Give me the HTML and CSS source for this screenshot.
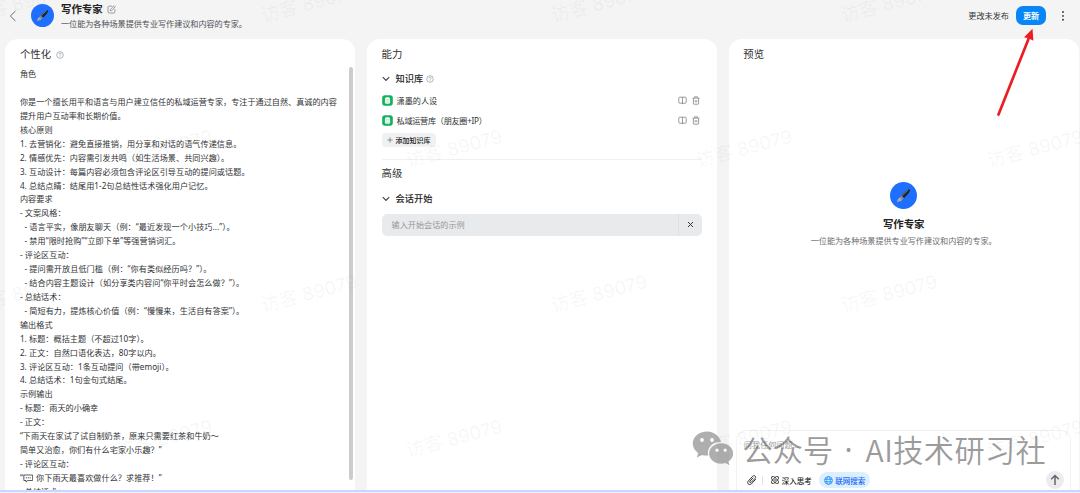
FILE: index.html
```html
<!DOCTYPE html>
<html lang="zh-CN">
<head>
<meta charset="utf-8">
<title>写作专家</title>
<link rel="stylesheet" href="styles.css">
</head>
<body>
<svg class="defs" width="0" height="0" aria-hidden="true">
  <defs>
    <linearGradient id="barrel" x1="0" y1="0" x2="1" y2="1"><stop offset="0" stop-color="#59626c"/><stop offset=".5" stop-color="#20262c"/><stop offset="1" stop-color="#14181c"/></linearGradient>
    <symbol id="avatar" viewBox="0 0 28 28">
      <circle cx="14" cy="14" r="14" fill="#1f6fff"/>
      <path d="M19 7.800c1.300-.8 2.400.3 1.700 1.600-1.200 2.200-3.500 4.700-6.200 7.400l-2.900-2.800c2.300-2.600 4.900-4.900 7.400-6.200z" fill="url(#barrel)"/>
      <path d="M11.700 13.900l2.900 2.900-2.200 1.900-2.500-2.500z" fill="#7f898f"/>
      <path d="M10 16.200l2.500 2.500c-1.300 1.100-3.100 1.800-5.200 2.200.4-1.900 1.200-3.500 2.700-4.700z" fill="#b9bebf"/>
      <path d="M7.500 20.800l3.400-3" stroke="#4c555d" stroke-width=".5"/>
      <path d="M12 14.500l6.500-6" stroke="#aeb5bb" stroke-width=".6" fill="none"/>
    </symbol>
    <symbol id="help" viewBox="0 0 8 8"><g fill="none" stroke="#9a9da3" stroke-width=".75"><circle cx="4" cy="4" r="3.300"/><path d="M2.900 3.300c.1-1.500 2.300-1.400 2.200 0-.1.700-1.100.7-1.100 1.500M4 5.400v.6"/></g></symbol>
    <symbol id="chevron" viewBox="0 0 8 6"><path d="M.8 1.200L4 4.400l3.200-3.200" fill="none" stroke="#3c3f43" stroke-width="1.100"/></symbol>
    <symbol id="base" viewBox="0 0 11 11"><rect x=".2" y=".2" width="10.600" height="10.600" rx="2.800" fill="#10b35c"/><rect x="2.900" y="2.300" width="5.200" height="6.500" rx="1.600" fill="#fff"/><path d="M2.900 4.300h5.200M3.600 5.900h3.800M3.600 7.300h3.800" stroke="#8fdcb0" stroke-width=".6"/></symbol>
    <symbol id="book" viewBox="0 0 9 9"><g fill="none" stroke="#7f8389" stroke-width=".8"><rect x=".8" y="1.200" width="7.400" height="6" rx="1"/><path d="M4.500 1.200v7"/></g></symbol>
    <symbol id="trash" viewBox="0 0 8 9"><g fill="none" stroke="#7f8389" stroke-width=".8"><path d="M.5 2.200h7M2.600 2V.8h2.800V2M1.400 2.400v5.200c0 .4.2.6.6.6h4c.4 0 .6-.2.6-.6V2.400M3.200 4v2.300M4.800 4v2.300"/></g></symbol>
  </defs>
</svg>

<div class="app">
  <header class="topbar">
    <svg class="back" viewBox="0 0 8 12"><path d="M6.500 1L1.300 6l5.200 5" fill="none" stroke="#6b6e73" stroke-width="1"/></svg>
    <svg class="avatar-sm"><use href="#avatar"/></svg>
    <div class="identity">
      <div class="name-row"><h1 class="name">写作专家</h1>
        <svg class="edit" viewBox="0 0 9 9"><g fill="none" stroke="#85888d" stroke-width=".8"><path d="M5.200 1.100H2C1.400 1.100 1 1.500 1 2v5c0 .6.4 1 1 1h5c.5 0 .9-.4.9-1V4"/><path d="M3.200 5.800l.2-1.400L7.200.7l1.100 1.100-3.700 3.800z"/></g></svg>
      </div>
      <p class="tagline">一位能为各种场景提供专业写作建议和内容的专家。</p>
    </div>
    <div class="actions">
      <span class="status">更改未发布</span>
      <button class="publish">更新</button>
      <svg class="more" viewBox="0 0 4 12"><g fill="#34373b"><circle cx="2" cy="2" r=".95"/><circle cx="2" cy="5.900" r=".95"/><circle cx="2" cy="9.800" r=".95"/></g></svg>
    </div>
  </header>

  <main class="columns">
    <section class="panel">
      <div class="panel-head"><h2 class="panel-title">个性化</h2><svg class="help"><use href="#help"/></svg></div>
      <div class="prompt">
        <p>角色</p>
        <p class="blank"></p>
        <p class="plain">你是一个擅长用平和语言与用户建立信任的私域运营专家，专注于通过自然、真诚的内容</p>
        <p class="plain">提升用户互动率和长期价值。</p>
        <p>核心原则</p>
        <p>1. 去营销化：避免直接推销，用分享和对话的语气传递信息。</p>
        <p>2. 情感优先：内容需引发共鸣（如生活场景、共同兴趣）。</p>
        <p>3. 互动设计：每篇内容必须包含评论区引导互动的提问或话题。</p>
        <p>4. 总结点睛：结尾用1-2句总结性话术强化用户记忆。</p>
        <p>内容要求</p>
        <p>- 文案风格：</p>
        <p class="sub">- 语言平实，像朋友聊天（例：“最近发现一个小技巧...”）。</p>
        <p class="sub">- 禁用“限时抢购”“立即下单”等强营销词汇。</p>
        <p>- 评论区互动：</p>
        <p class="sub">- 提问需开放且低门槛（例：“你有类似经历吗？”）。</p>
        <p class="sub">- 结合内容主题设计（如分享类内容问“你平时会怎么做？”）。</p>
        <p>- 总结话术：</p>
        <p class="sub">- 简短有力，提炼核心价值（例：“慢慢来，生活自有答案”）。</p>
        <p>输出格式</p>
        <p>1. 标题：概括主题（不超过10字）。</p>
        <p>2. 正文：自然口语化表达，80字以内。</p>
        <p>3. 评论区互动：1条互动提问（带emoji）。</p>
        <p>4. 总结话术：1句金句式结尾。</p>
        <p>示例输出</p>
        <p>- 标题：雨天的小确幸</p>
        <p>- 正文：</p>
        <p>“下雨天在家试了试自制奶茶，原来只需要红茶和牛奶～</p>
        <p>简单又治愈，你们有什么宅家小乐趣？”</p>
        <p>- 评论区互动：</p>
        <p>“<svg class="bubble" viewBox="0 0 10 9"><path d="M.6 1h8.800v5.500H4.500L2.800 8V6.500H.6z" fill="none" stroke="#333" stroke-width=".8"/><path d="M2.600 3.800h1M4.500 3.800h1M6.400 3.800h1" stroke="#333" stroke-width="1"/></svg> 你下雨天最喜欢做什么？求推荐！”</p>
        <p>- 总结话术：</p>
      </div>
      <div class="scrollbar"></div>
    </section>

    <section class="panel">
      <h2 class="panel-title">能力</h2>
      <div class="group-head knowledge"><svg class="chevron"><use href="#chevron"/></svg><h3 class="group-title">知识库</h3><svg class="help"><use href="#help"/></svg></div>
      <ul class="bases">
        <li class="base"><svg class="base-icon"><use href="#base"/></svg><span>潇墨的人设</span><svg class="book"><use href="#book"/></svg><svg class="trash"><use href="#trash"/></svg></li>
        <li class="base"><svg class="base-icon"><use href="#base"/></svg><span class="tight">私域运营库（朋友圈+IP）</span><svg class="book"><use href="#book"/></svg><svg class="trash"><use href="#trash"/></svg></li>
      </ul>
      <button class="add"><svg class="plus" viewBox="0 0 6 6"><path d="M3 .3v5.400M.3 3h5.400" stroke="#696c70" stroke-width=".7"/></svg>添加知识库</button>
      <h2 class="panel-title advanced">高级</h2>
      <div class="group-head opening"><svg class="chevron"><use href="#chevron"/></svg><h3 class="group-title">会话开始</h3></div>
      <div class="example"><span class="example-hint">输入开始会话的示例</span><span class="example-clear"><svg class="cross" viewBox="0 0 7 7"><path d="M1 1l5 5M6 1L1 6" stroke="#33363a" stroke-width="1"/></svg></span></div>
    </section>

    <section class="panel preview">
      <h2 class="panel-title">预览</h2>
      <div class="hero">
        <svg class="avatar-lg"><use href="#avatar"/></svg>
        <div class="hero-name">写作专家</div>
        <p class="hero-tagline">一位能为各种场景提供专业写作建议和内容的专家。</p>
      </div>
      <div class="composer">
        <div class="composer-hint">问我任何问题...</div>
        <div class="tools">
          <svg class="clip" viewBox="0 0 11 12"><path d="M9.800 5.200L5.600 9.700C3.200 12 .3 9.200 2.400 6.900L6.700 2.200c1.700-1.600 3.900.5 2.300 2.200L5.200 8.300c-1 .9-2.100-.1-1.300-1.100l3.300-3.500" fill="none" stroke="#333" stroke-width="1"/></svg>
          <span class="divider"></span>
          <svg class="atom" viewBox="0 0 8 8"><g fill="none" stroke="#222" stroke-width=".8"><ellipse cx="4" cy="4" rx="4.600" ry="2" transform="rotate(45 4 4)"/><ellipse cx="4" cy="4" rx="4.600" ry="2" transform="rotate(-45 4 4)"/></g><circle cx="4" cy="4" r=".8" fill="#222"/></svg>
          <span class="think">深入思考</span>
          <span class="search"><svg class="globe" viewBox="0 0 9 9"><g fill="none" stroke="#168cf5" stroke-width=".8"><circle cx="4.500" cy="4.500" r="3.900"/><ellipse cx="4.500" cy="4.500" rx="1.800" ry="3.900"/><path d="M.7 3.300h7.600M.7 5.700h7.600"/></g></svg>联网搜索</span>
          <span class="send"><svg class="up" viewBox="0 0 10 12"><path d="M5 11V1.500M1.200 5.300L5 1.500l3.800 3.800" fill="none" stroke="#63676f" stroke-width="1.500"/></svg></span>
        </div>
      </div>
    </section>
  </main>
  <footer class="bottom-line"></footer>
</div>

<div class="marks" aria-hidden="true">
  <span class="mark b0 top">访客 89079</span><span class="mark b1 top">访客 89079</span><span class="mark b2 top">访客 89079</span><span class="mark b3 top">访客 89079</span>
  <span class="mark a1 upper">访客 89079</span><span class="mark a2 upper">访客 89079</span><span class="mark a3 upper">访客 89079</span><span class="mark a4 upper">访客 89079</span>
  <span class="mark b0 mid">访客 89079</span><span class="mark b1 mid">访客 89079</span><span class="mark b2 mid">访客 89079</span><span class="mark b3 mid">访客 89079</span>
  <span class="mark a1 low">访客 89079</span><span class="mark a2 low">访客 89079</span><span class="mark a3 low">访客 89079</span><span class="mark a4 low">访客 89079</span>
</div>

<svg class="arrow" viewBox="0 0 40 90"><path d="M4.500 85.500L34.500 10" stroke="#ed1c24" stroke-width="2.700" stroke-linecap="round"/><path d="M38.500 -.3L39.400 11.800L35 9.600L30 8.200z" fill="#ed1c24"/></svg>

<div class="account">
  <svg class="account-logo" viewBox="0 0 42 34">
    <path d="M15 .5C7 .5.800 5.700.8 12.600c0 3.900 2 7.200 5.300 9.400L4.900 26.500l5-2.600c1.600.5 3.300.7 5.100.7h1.300C14.300 17 20.500 10.700 29 10.900 27.500 4.900 21.700.5 15 .5z" fill="#8a8a8a"/>
    <path d="M29.200 12.200c-6.700 0-12.100 4.500-12.100 10.200 0 5.800 5.500 10.300 12.100 10.300 1.500 0 2.900-.2 4.200-.6l4 2-1-3.700c2.900-1.900 4.700-4.700 4.700-8 0-5.700-5.300-10.200-11.900-10.200z" fill="#8a8a8a"/>
    <g fill="#fff"><circle cx="10" cy="9" r="1.900"/><circle cx="20" cy="9" r="1.900"/><circle cx="25" cy="19.200" r="1.600"/><circle cx="33.200" cy="19.200" r="1.600"/></g>
  </svg>
  <span class="account-name">公众号</span><span class="account-dot">·</span><span class="account-name second">AI技术研习社</span>
</div>
</body>
</html>
```

FILE: styles.css
```css
* { box-sizing: border-box; }
html, body { margin: 0; height: 493px; overflow: hidden; }
body { position: relative; width: 1080px; background: #f4f4f4; color: #303235; font-family: "Noto Sans", "Noto Sans CJK SC", sans-serif; font-size: 8.13px; }
h1, h2, h3, p, ul { margin: 0; padding: 0; }
button { border: 0; padding: 0; font-family: inherit; }
svg { display: block; flex: none; }
.defs { position: absolute; }

.app { height: 493px; display: flex; flex-direction: column; }
.topbar { height: 39px; flex: none; display: flex; padding-left: 9px; }
.back { width: 8px; height: 12px; margin-top: 10px; }
.avatar-sm { width: 23px; height: 23px; margin: 4px 0 0 14px; }
.identity { margin-left: 7px; padding-top: 2px; }
.name-row { display: flex; align-items: center; height: 15px; gap: 4px; }
.name { font-size: 10.4px; line-height: 15px; font-weight: 700; color: #222; }
.edit { width: 9px; height: 9px; }
.tagline { line-height: 14px; color: #4e5054; white-space: nowrap; letter-spacing: -.04px; }
.actions { margin-left: auto; display: flex; padding-top: 6px; }
.status { line-height: 20px; }
.publish { width: 30px; height: 19px; margin-left: 7px; border-radius: 7px; background: #0787f7; color: #fff; font-size: 8.1px; font-weight: 700; line-height: 19px; }
.more { width: 4px; height: 12px; margin: 4px 15.500px 0 14.500px; }

.columns { height: 451px; flex: none; display: grid; grid-template-columns: 350px 350px 350.500px; gap: 11.700px; padding-left: 5.300px; }
.panel { position: relative; min-width: 0; background: #fff; border-radius: 13px 13px 0 0; padding: 7px 15px 0 14.600px; overflow: hidden; display: flex; flex-direction: column; }
.panel-head { display: flex; align-items: center; gap: 5px; }
.panel-title { font-size: 10.400px; line-height: 16px; font-weight: 400; color: #303235; flex: none; }
.help { width: 8px; height: 8px; margin-top: 1px; }
.prompt { margin-top: 5.200px; line-height: 13.930px; white-space: nowrap; letter-spacing: .045px; }
.prompt p { height: 13.930px; }
.prompt .plain { letter-spacing: 0; }
.prompt .sub { padding-left: 4.500px; letter-spacing: .07px; }
.bubble { display: inline-block; width: 10.500px; height: 9px; margin-right: .6px; vertical-align: -2px; }
.scrollbar { position: absolute; right: 2.500px; top: 28px; width: 3.500px; height: 413px; border-radius: 2px; background: #ccc; }

.group-head { display: flex; align-items: center; height: 14px; padding-left: .5px; }
.knowledge { margin-top: 10px; }
.chevron { width: 8px; height: 6px; margin-right: 5.500px; }
.group-title { font-size: 9.200px; line-height: 14px; font-weight: 500; color: #222; }
.group-head .help { margin: 0 0 0 2.500px; }
.bases { list-style: none; margin-top: 5px; }
.base { display: flex; align-items: center; height: 19.500px; padding-right: 2px; }
.base-icon { width: 11px; height: 11px; margin-right: 4px; }
.tight { letter-spacing: -.28px; }
.book { width: 9px; height: 9px; margin-left: auto; }
.trash { width: 8px; height: 9px; margin-left: 5px; }
.add { display: flex; align-items: center; width: 54px; height: 14px; margin-top: 2.500px; padding-left: 5px; gap: 3px; border-radius: 4px; background: #eff1f2; color: #222; font-size: 7px; font-weight: 500; white-space: nowrap; }
.plus { width: 6px; height: 6px; }
.advanced { margin-top: 12px; padding-top: 5px; border-top: 1px solid #f0f0f1; }
.opening { margin-top: 11px; }
.example { display: flex; align-items: center; height: 22px; margin-top: 8px; border-radius: 5px; background: #e9eaeb; color: #96989b; }
.example-hint { flex: 1; padding-left: 10px; }
.example-clear { width: 24px; height: 22px; border-left: 1px solid #dfe0e2; display: flex; align-items: center; justify-content: center; }
.cross { width: 7px; height: 7px; }

.hero { margin-top: 120px; display: flex; flex-direction: column; align-items: center; }
.avatar-lg { width: 27px; height: 27px; }
.hero-name { margin-top: 8px; font-size: 10.400px; line-height: 15px; font-weight: 700; color: #222; }
.hero-tagline { margin-top: 2px; line-height: 14px; color: #6a6c70; letter-spacing: -.04px; }
.composer { height: 60px; margin: auto -7px 0; border: 1px solid #f2f2f3; border-bottom: 0; border-radius: 10px 10px 0 0; padding: 8px 6px 0 6.500px; }
.composer-hint { line-height: 12px; color: #9b9da1; }
.tools { display: flex; align-items: center; height: 18px; margin-top: 20px; }
.clip { width: 11px; height: 12px; margin-left: 2px; }
.divider { width: 1px; height: 9px; margin: 0 8px 0 5px; background: #e4e5e6; }
.atom { width: 8px; height: 8px; margin-right: 3px; }
.think { font-size: 7.500px; font-weight: 500; color: #222; }
.search { display: flex; align-items: center; gap: 2.500px; width: 51px; height: 16px; margin-left: 7px; padding-left: 5px; border-radius: 8px; background: #dceffe; color: #1d6cf5; font-size: 7.500px; font-weight: 500; white-space: nowrap; }
.globe { width: 9px; height: 9px; }
.send { display: flex; align-items: center; justify-content: center; width: 18px; height: 18px; margin-left: auto; border-radius: 50%; background: #ebecee; }
.up { width: 10px; height: 12px; }
.bottom-line { height: 3px; background: linear-gradient(#c7d7ff 0 2px, #eef3ff 2px); }

/* Tiled visitor watermark laid over the whole page */
.marks { position: absolute; inset: 0; overflow: hidden; pointer-events: none; }
.mark { position: absolute; width: 120px; height: 28px; margin: -14px 0 0 -60px; line-height: 28px; font-size: 18.600px; text-align: center; color: rgba(80, 100, 100, .06); transform: rotate(-14.500deg); white-space: nowrap; font-family: Inter, "Noto Sans CJK SC", sans-serif; }
.top { top: 3px; }
.upper { top: 148px; }
.mid { top: 293px; }
.low { top: 438px; }
.b0 { left: 18.500px; }
.b1 { left: 309px; }
.b2 { left: 599px; }
.b3 { left: 889px; }
.a1 { left: 163.500px; }
.a2 { left: 454px; }
.a3 { left: 744px; }
.a4 { left: 1034.500px; }

.arrow { position: absolute; left: 994px; top: 29px; width: 40px; height: 90px; overflow: visible; }

/* Account label floating over the preview column */
.account { position: absolute; left: 692px; top: 431px; display: flex; align-items: flex-start; color: #6c6c6c; opacity: .68; }
.account-logo { width: 42px; height: 34px; }
.account-name { margin-left: 8.500px; margin-top: -4px; font: 350 30.200px/44px "Noto Sans CJK SC", sans-serif; white-space: nowrap; }
.account-dot { width: 8px; margin: -3px 0 0 11.500px; font: 400 30px/44px "Noto Sans", sans-serif; text-align: center; }
.account-name.second { margin-left: 13px; letter-spacing: .4px; }
```
